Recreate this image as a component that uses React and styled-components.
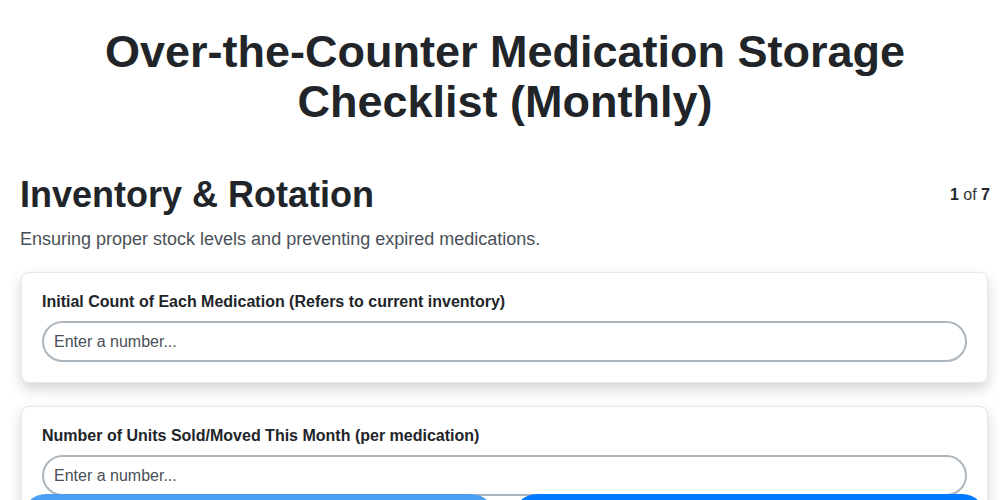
import styled, { createGlobalStyle } from "styled-components";

const Global = createGlobalStyle`
body {
  margin: 0;
  background: #fff;
  font-family: "Liberation Sans", Arial, sans-serif;
  color: #212529;
}
`

const Page = styled.div`
padding: 0 10px 80px 20px;
`
const Title = styled.h1`
max-width: 860px;
margin: 27px auto 0;
font-size: 45px;
line-height: 50px;
font-weight: 700;
text-align: center;
`
const SectionHead = styled.div`
display: flex;
justify-content: space-between;
align-items: flex-start;
margin-top: 46px;
`
const SectionTitle = styled.h2`
margin: 0;
font-size: 36px;
line-height: 44px;
font-weight: 700;
`
const Counter = styled.div`
font-size: 16px;
margin-top: 13px;
color: #333;
b { color: #212529; }
`
const Description = styled.p`
margin: 12px 0 22px;
font-size: 18px;
color: #495057;
`
const Card = styled.div`
background: #fff;
border: 1px solid #e6e6ec;
border-radius: 8px;
box-shadow: 0 6px 14px rgba(0,0,0,0.17);
padding: 20px;
margin: 0 2px 23px 1px;
`
const Label = styled.label`
display: block;
font-size: 16px;
font-weight: 700;
margin-bottom: 10px;
`
const Input = styled.input`
box-sizing: border-box;
width: 100%;
height: 41px;
border: 2px solid #adb5bd;
border-radius: 21px;
padding: 0 10px;
font-size: 16px;
font-family: inherit;
color: #212529;
&::placeholder { color: #495057; }
`
const Footer = styled.div`
position: fixed;
left: 0;
right: 0;
bottom: 0;
display: flex;
gap: 18px;
padding: 0 14px 0 22px;
height: 6px;
`
const NavButton = styled.button`
flex: 1;
height: 48px;
border: none;
border-radius: 24px;
background: ${p => p.primary ? "#007bff" : "#4a9ff5"};
color: #fff;
font-size: 16px;
font-weight: 700;
font-family: inherit;
`

const questions = [
  "Initial Count of Each Medication (Refers to current inventory)",
  "Number of Units Sold/Moved This Month (per medication)",
]

export default function App() {
  return (
    <>
      <Global />
      <Page>
        <Title>Over-the-Counter Medication Storage Checklist (Monthly)</Title>
        <SectionHead>
          <SectionTitle>Inventory &amp; Rotation</SectionTitle>
          <Counter><b>1</b> of <b>7</b></Counter>
        </SectionHead>
        <Description>Ensuring proper stock levels and preventing expired medications.</Description>
        {questions.map(q => (
          <Card key={q}>
            <Label>{q}</Label>
            <Input type="number" placeholder="Enter a number..." />
          </Card>
        ))}
      </Page>
      <Footer>
        <NavButton>Previous</NavButton>
        <NavButton primary>Next</NavButton>
      </Footer>
    </>
  )
}
